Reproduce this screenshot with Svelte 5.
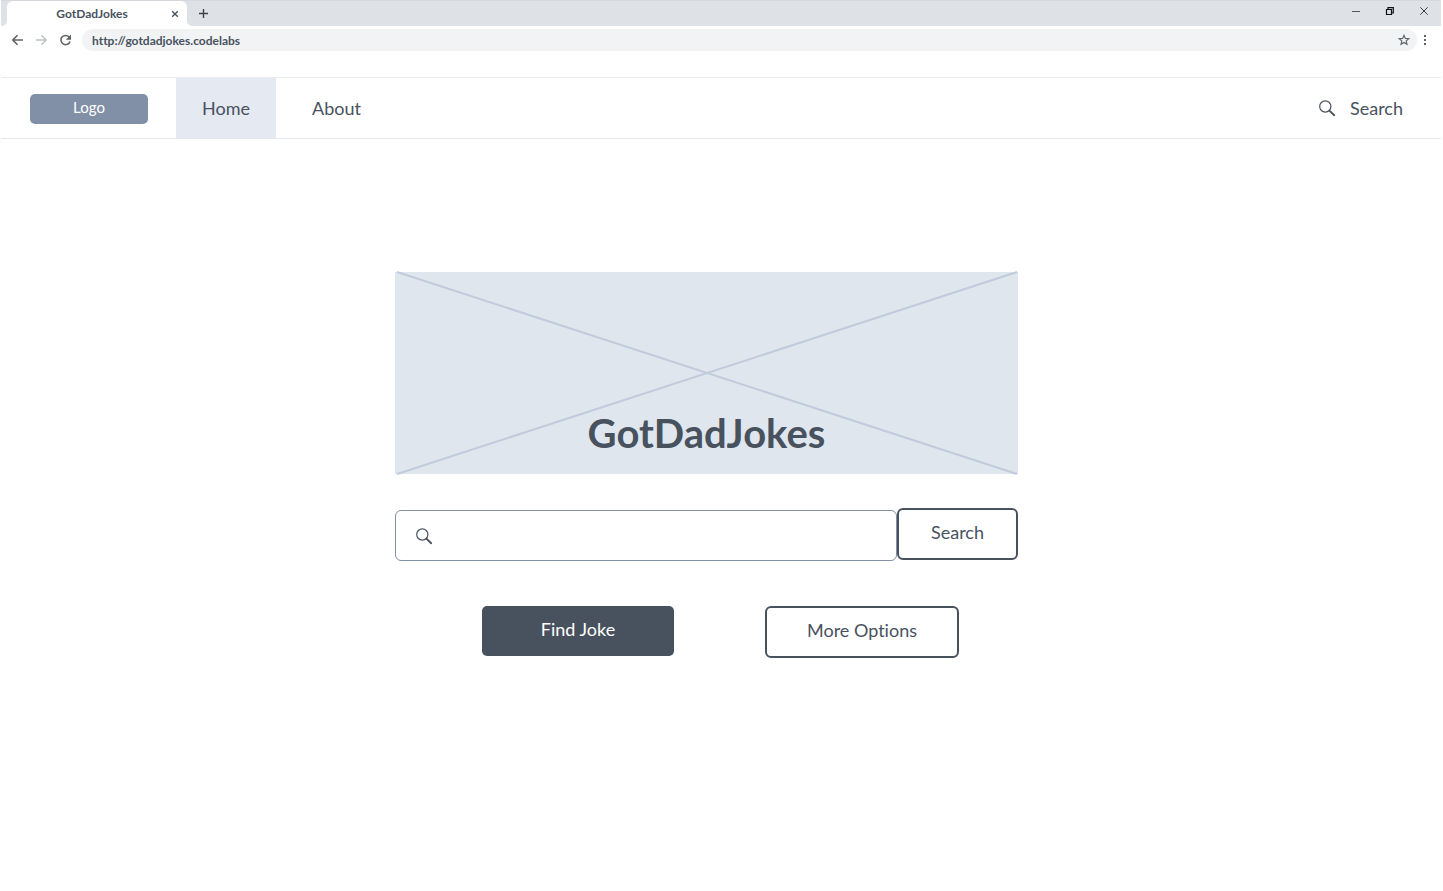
<script lang="ts">
  let query = $state('');
  let address = $state('http://gotdadjokes.codelabs');
</script>

{#snippet magnifier()}
  <svg class="magnifier" viewBox="0 0 18 18" aria-hidden="true">
    <circle cx="7.3" cy="7.5" r="5.6" fill="none" stroke="currentColor" stroke-width="1.2" />
    <path d="M11.4 11.6 L16.2 16.2" stroke="currentColor" stroke-width="1.9" stroke-linecap="round" />
  </svg>
{/snippet}

<div class="window">
  <header>
    <div class="tabs">
      <div class="lead"></div>
      <div class="tab">
        <span class="title">GotDadJokes</span>
        <button class="plain close" aria-label="Close tab">
          <svg width="8" height="8" viewBox="0 0 8 8"><path d="M1.2 1.2 L6.8 6.8 M6.8 1.2 L1.2 6.8" stroke="#48525e" stroke-width="1.4" /></svg>
        </button>
      </div>
      <div class="rest">
        <button class="plain" aria-label="New tab">
          <svg width="11" height="11" viewBox="0 0 11 11"><path d="M5.5 1 V10 M1 5.5 H10" stroke="#3f4348" stroke-width="1.4" /></svg>
        </button>
        <div class="controls">
          <button class="plain" aria-label="Minimize">
            <svg width="10" height="10" viewBox="0 0 10 10"><path d="M1 5.5 H9" stroke="#55595e" /></svg>
          </button>
          <button class="plain" aria-label="Restore">
            <svg width="10" height="10" viewBox="0 0 10 10"><path d="M1.5 3.5 H6.5 V8.5 H1.5 Z M3 3 V1.7 H8.3 V7 H7" fill="none" stroke="#111" stroke-width="1.2" /></svg>
          </button>
          <button class="plain" aria-label="Close">
            <svg width="10" height="10" viewBox="0 0 10 10"><path d="M1.3 1.3 L8.7 8.7 M8.7 1.3 L1.3 8.7" stroke="#3c4045" stroke-width="1" /></svg>
          </button>
        </div>
      </div>
    </div>
    <div class="toolbar">
      <button class="plain" aria-label="Back">
        <svg width="13" height="12" viewBox="0 0 13 12"><path d="M12 6 H2 M6.5 1.3 L1.8 6 L6.5 10.7" fill="none" stroke="#5f6368" stroke-width="1.6" /></svg>
      </button>
      <button class="plain" aria-label="Forward">
        <svg width="13" height="12" viewBox="0 0 13 12"><path d="M1 6 H11 M6.5 1.3 L11.2 6 L6.5 10.7" fill="none" stroke="#bdc1c5" stroke-width="1.5" /></svg>
      </button>
      <button class="plain" aria-label="Reload">
        <svg width="13" height="12" viewBox="0 0 13 12"><path d="M10.2 3.2 A4.6 4.6 0 1 0 11 7.4" fill="none" stroke="#5f6368" stroke-width="1.6" /><path d="M12 0.5 V5.7 H6.8 Z" fill="#5f6368" /></svg>
      </button>
      <div class="address">
        <input type="text" aria-label="Address" bind:value={address} />
        <button class="plain" aria-label="Bookmark">
          <svg width="12" height="12" viewBox="0 0 12 12"><path d="M6 1.3 L7.35 4.4 L10.8 4.7 L8.2 6.95 L9 10.3 L6 8.5 L3 10.3 L3.8 6.95 L1.2 4.7 L4.65 4.4 Z" fill="none" stroke="#5f6368" stroke-width="1.1" /></svg>
        </button>
      </div>
      <button class="plain menu" aria-label="Menu">
        <svg width="4" height="12" viewBox="0 0 4 12"><path d="M1 1 H3 V3 H1 Z M1 5 H3 V7 H1 Z M1 9 H3 V11 H1 Z" fill="#5f6368" /></svg>
      </button>
    </div>
  </header>

  <nav>
    <a class="logo" href="#logo">Logo</a>
    <a class="link active" href="#home">Home</a>
    <a class="link" href="#about">About</a>
    <a class="find" href="#search">{@render magnifier()}Search</a>
  </nav>

  <main>
    <div class="lookup">
      <div class="hero">
        <svg class="cross" viewBox="0 0 623 202" preserveAspectRatio="none" aria-hidden="true">
          <path d="M2 0 L622 202 M622 0 L2 202" stroke="#c0cbdb" stroke-width="2" />
        </svg>
        <h1>GotDadJokes</h1>
      </div>
      <form onsubmit={(e) => e.preventDefault()}>
        <label class="field">
          {@render magnifier()}
          <input type="text" aria-label="Search jokes" bind:value={query} />
        </label>
        <button class="outlined">Search</button>
      </form>
    </div>
    <div class="actions">
      <button class="solid">Find Joke</button>
      <button class="outlined wide">More Options</button>
    </div>
  </main>
</div>

<style>
  :global(body) {
    margin: 0;
    background: #fff;
  }
  .window {
    margin: 0 2px 0 1px;
    font-family: Lato, sans-serif;
    font-size: 18px;
    line-height: 24px;
    font-variant-ligatures: none;
    color: #48525e;
  }
  .window * {
    box-sizing: border-box;
  }
  button, input {
    font: inherit;
    font-variant-ligatures: none;
    color: inherit;
  }
  svg {
    display: block;
  }
  .plain {
    padding: 0;
    border: 0;
    background: none;
  }
  .tabs {
    display: flex;
    height: 26px;
    border-top: 1px solid #d5d8dd;
    background: #fff;
  }
  .lead {
    width: 6px;
    background: #dee1e6;
    border-bottom-right-radius: 5px;
  }
  .tab {
    display: flex;
    align-items: center;
    width: 180px;
    padding-right: 8px;
    border-radius: 6px 6px 0 0;
    background: #fff;
    box-shadow: 0 -6px 0 #dee1e6;
    clip-path: inset(0);
    font-size: 12px;
    font-weight: 700;
  }
  .title {
    flex: 1;
    padding-left: 6px;
    text-align: center;
  }
  .rest {
    flex: 1;
    display: flex;
    align-items: center;
    justify-content: space-between;
    padding: 0 12px 0 11px;
    border-bottom-left-radius: 5px;
    background: #dee1e6;
  }
  .controls {
    display: flex;
    gap: 24px;
    padding-bottom: 5px;
  }
  .toolbar {
    display: flex;
    align-items: center;
    gap: 11px;
    height: 28px;
    padding: 0 14px 0 10px;
  }
  .address {
    flex: 1;
    display: flex;
    align-items: center;
    height: 22px;
    margin-left: -1px;
    padding: 0 7px 0 10px;
    border-radius: 11px;
    background: #f1f3f4;
    font-size: 12px;
    font-weight: 700;
  }
  .address input {
    flex: 1;
    padding: 1px 0 0;
    border: 0;
    background: none;
    outline: 0;
  }
  .menu {
    margin-left: -5px;
  }
  nav {
    display: flex;
    align-items: center;
    height: 62px;
    margin-top: 23px;
    padding: 0 38px 0 29px;
    border-top: 1px solid #e9ebee;
    border-bottom: 1px solid #e4e8f1;
  }
  a {
    color: inherit;
    text-decoration: none;
  }
  .logo {
    width: 118px;
    height: 30px;
    margin: 2px 28px 0 0;
    border-radius: 5px;
    background: #8290a7;
    color: #fff;
    font-size: 15px;
    line-height: 27px;
    text-align: center;
  }
  .link {
    padding: 18px 26px;
  }
  .link + .link {
    margin-left: 10px;
  }
  .active {
    background: #e4e9f2;
  }
  .find {
    display: flex;
    align-items: center;
    gap: 14px;
    margin-left: auto;
  }
  .magnifier {
    width: 18px;
    height: 18px;
  }
  main {
    display: flex;
    flex-direction: column;
    align-items: center;
    padding: 133px 1px 40px 0;
  }
  .lookup {
    width: 100%;
    max-width: 623px;
    margin-right: 28px;
  }
  .hero {
    position: relative;
    display: flex;
    align-items: flex-end;
    justify-content: center;
    height: 202px;
    padding-bottom: 17px;
    background: #dfe6ee;
  }
  .cross {
    position: absolute;
    inset: 0;
    width: 100%;
    height: 100%;
    overflow: visible;
  }
  h1 {
    position: relative;
    margin: 0;
    font-size: 40px;
    line-height: 48px;
    font-weight: 700;
  }
  form {
    display: flex;
    align-items: flex-start;
    margin-top: 34px;
  }
  .field {
    flex: 1;
    display: flex;
    align-items: center;
    gap: 12px;
    height: 51px;
    margin-top: 2px;
    padding: 0 19px;
    border: 1px solid #8290a7;
    border-radius: 6px;
  }
  .field input {
    flex: 1;
    min-width: 0;
    padding: 0;
    border: 0;
    outline: 0;
    background: none;
  }
  .outlined {
    width: 121px;
    height: 52px;
    padding: 0 0 4px;
    border: 2px solid #48525e;
    border-radius: 6px;
    background: #fff;
  }
  .wide {
    width: 194px;
  }
  .actions {
    display: flex;
    flex-wrap: wrap;
    gap: 16px 91px;
    margin-top: 45px;
  }
  .solid {
    width: 192px;
    height: 50px;
    padding: 0 0 4px;
    border: 0;
    border-radius: 5px;
    background: #48525e;
    color: #fff;
  }
</style>
